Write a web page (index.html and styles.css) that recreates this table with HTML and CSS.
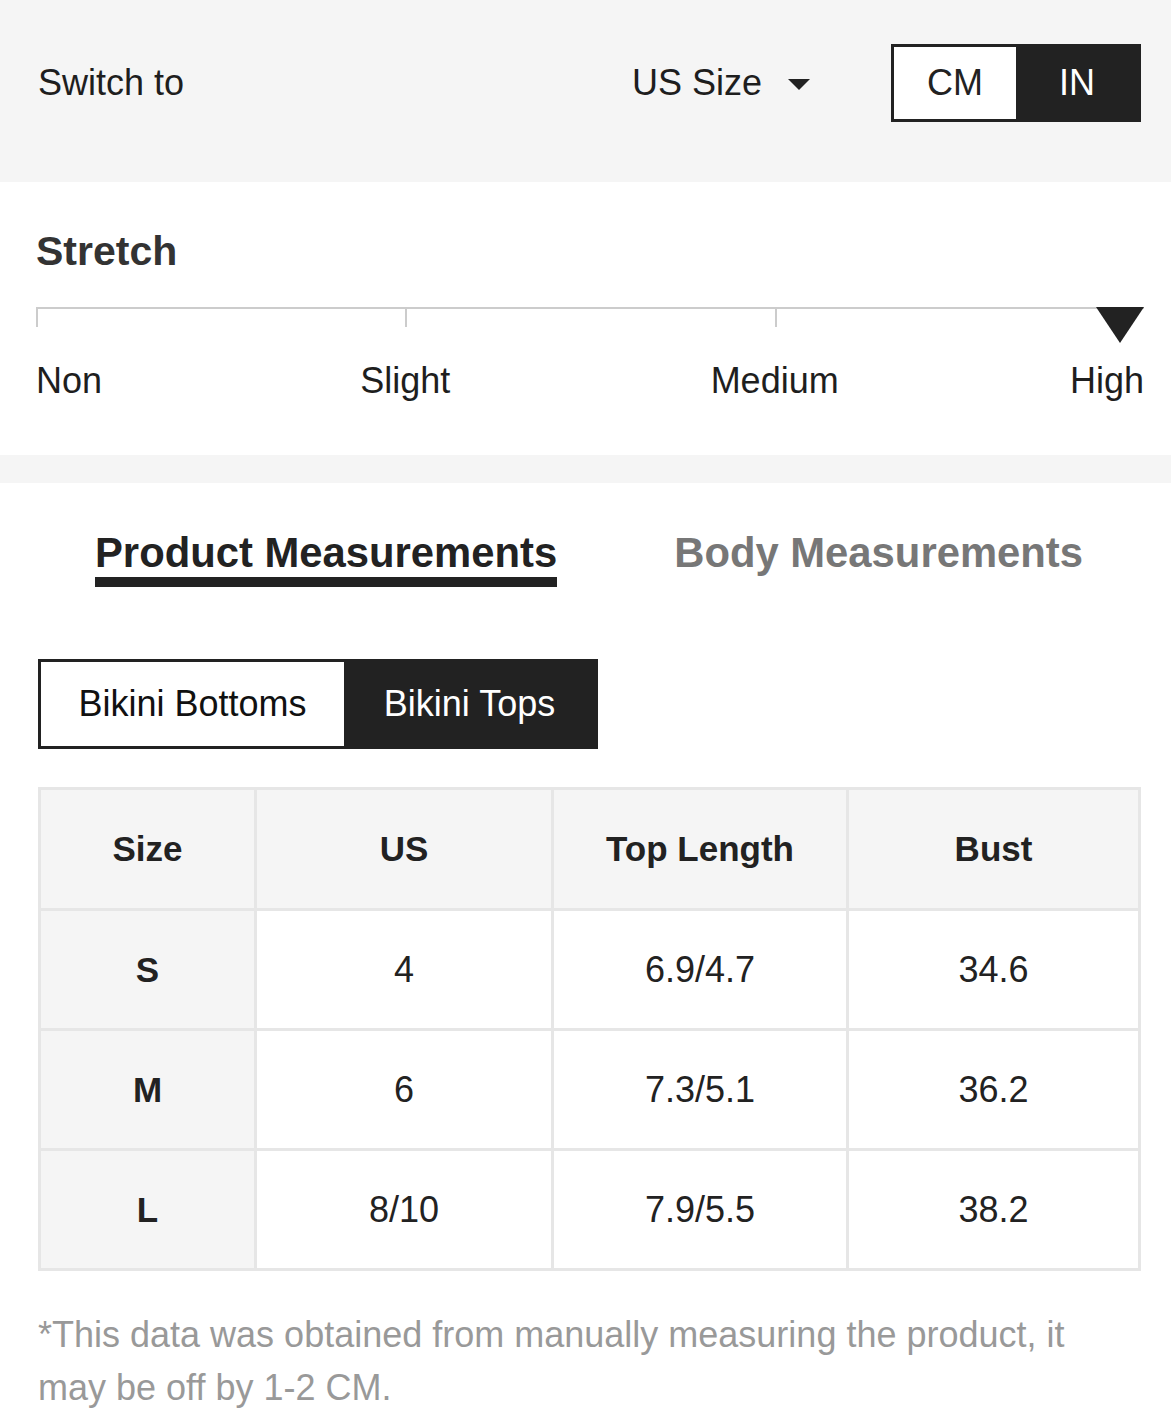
FILE: index.html
```html
<!DOCTYPE html>
<html lang="en">
<head>
<meta charset="utf-8">
<title>Size Guide</title>
<link rel="stylesheet" href="styles.css">
</head>
<body>
<div class="page">
  <section class="switch-bar">
    <div class="switch-row">
      <span class="switch-label">Switch to</span>
      <div class="switch-right">
        <div class="size-select">
          <span>US Size</span>
          <span class="caret"></span>
        </div>
        <div class="unit-toggle">
          <span class="unit">CM</span>
          <span class="unit active">IN</span>
        </div>
      </div>
    </div>
  </section>

  <section class="stretch">
    <h2 class="stretch-title">Stretch</h2>
    <div class="scale">
      <span class="seg"></span><span class="seg"></span><span class="seg"></span>
      <span class="marker"></span>
    </div>
    <div class="scale-labels">
      <span class="lbl lbl-non">Non</span>
      <span class="lbl lbl-slight">Slight</span>
      <span class="lbl lbl-medium">Medium</span>
      <span class="lbl lbl-high">High</span>
    </div>
  </section>

  <div class="divider-band"></div>

  <section class="measure">
    <div class="tabs">
      <span class="tab active">Product Measurements</span>
      <span class="tab">Body Measurements</span>
    </div>

    <div class="type-toggle">
      <span class="type">Bikini Bottoms</span>
      <span class="type active">Bikini Tops</span>
    </div>

    <table class="size-table">
      <colgroup>
        <col class="c1"><col class="c2"><col class="c3"><col class="c4">
      </colgroup>
      <thead>
        <tr class="head-row"><th>Size</th><th>US</th><th>Top Length</th><th>Bust</th></tr>
      </thead>
      <tbody>
        <tr><th>S</th><td>4</td><td>6.9/4.7</td><td>34.6</td></tr>
        <tr><th>M</th><td>6</td><td>7.3/5.1</td><td>36.2</td></tr>
        <tr><th>L</th><td>8/10</td><td>7.9/5.5</td><td>38.2</td></tr>
      </tbody>
    </table>

    <p class="note">*This data was obtained from manually measuring the product, it may be off by 1-2 CM.</p>
  </section>
</div>
</body>
</html>
```

FILE: styles.css
```css
* { box-sizing: border-box; }

html, body {
  margin: 0;
  padding: 0;
  background: #ffffff;
}

body {
  font-family: "Liberation Sans", Arial, Helvetica, sans-serif;
  color: #222222;
  width: 1171px;
}

.page {
  width: 1171px;
}

/* top switch bar */
.switch-bar {
  background: #f5f5f5;
  height: 182px;
  padding: 44px 30px 0 38px;
}

.switch-row {
  display: flex;
  align-items: center;
  height: 78px;
}

.switch-label {
  font-size: 36px;
  line-height: 42px;
  color: #1e1e1e;
}

.switch-right {
  margin-left: auto;
  display: flex;
  align-items: center;
  gap: 81px;
}

.size-select {
  display: flex;
  align-items: center;
  gap: 26px;
  font-size: 36px;
  line-height: 42px;
  color: #1e1e1e;
}

.caret {
  width: 0;
  height: 0;
  border-left: 11px solid transparent;
  border-right: 11px solid transparent;
  border-top: 11px solid #222222;
  margin-top: 2px;
}

.unit-toggle {
  display: flex;
  width: 250px;
  height: 78px;
  border: 3px solid #222222;
  background: #ffffff;
}

.unit {
  flex: 1;
  display: flex;
  align-items: center;
  justify-content: center;
  font-size: 36px;
  line-height: 42px;
  color: #222222;
}

.unit.active {
  background: #222222;
  color: #ffffff;
}

/* stretch */
.stretch {
  padding: 45px 27px 53px 36px;
}

.stretch-title {
  margin: 0;
  font-size: 41px;
  line-height: 48px;
  font-weight: 700;
  color: #333333;
}

.scale {
  position: relative;
  margin-top: 32px;
  height: 53px;
  width: 1108px;
  display: flex;
  border-top: 2px solid #cccccc;
}

.seg {
  flex: 1;
  height: 18px;
  border-left: 2px solid #cccccc;
}

.marker {
  position: absolute;
  right: 0;
  top: -2px;
  width: 0;
  height: 0;
  border-left: 24px solid transparent;
  border-right: 24px solid transparent;
  border-top: 36px solid #222222;
}

.scale-labels {
  width: 1108px;
  display: grid;
  grid-template-columns: repeat(3, 1fr);
  font-size: 36px;
  line-height: 42px;
  color: #1e1e1e;
}

.lbl { grid-row: 1; white-space: nowrap; }
.lbl-non { grid-column: 1; justify-self: start; }
.lbl-slight { grid-column: 2; justify-self: start; transform: translateX(-50%); }
.lbl-medium { grid-column: 3; justify-self: start; transform: translateX(-50%); }
.lbl-high { grid-column: 3; justify-self: end; }

.divider-band {
  height: 28px;
  background: #f5f5f5;
}

/* measurements */
.measure {
  padding: 46px 30px 0 38px;
}

.tabs {
  display: flex;
  justify-content: center;
  gap: 117px;
  margin-left: -38px;
  margin-right: -30px;
  padding-left: 7px;
}

.tab {
  font-size: 41.8px;
  line-height: 48px;
  font-weight: 700;
  color: #777777;
  border-bottom: 10px solid transparent;
}

.tab.active {
  color: #222222;
  border-bottom-color: #222222;
}

.type-toggle {
  display: inline-flex;
  margin-top: 72px;
  height: 90px;
  border: 3px solid #222222;
}

.type {
  display: flex;
  align-items: center;
  justify-content: center;
  width: 303px;
  font-size: 36px;
  line-height: 42px;
  color: #111111;
}

.type.active {
  width: 251px;
  background: #222222;
  color: #ffffff;
}

.size-table {
  margin-top: 38px;
  width: 1103px;
  table-layout: fixed;
  border-collapse: separate;
  border-spacing: 3px;
  background: #e6e6e6;
}

.c1 { width: 213px; }
.c2 { width: 294px; }
.c3 { width: 292px; }
.c4 { width: 289px; }

.size-table th,
.size-table td {
  height: 117px;
  padding: 0;
  text-align: center;
  vertical-align: middle;
  color: #222222;
}

.size-table .head-row th {
  height: 118px;
}

.size-table th {
  font-size: 35px;
  font-weight: 700;
  background: #f5f5f5;
}

.size-table td {
  font-size: 36px;
  font-weight: 400;
  background: #ffffff;
}

.note {
  margin: 37px 0 0 0;
  max-width: 1080px;
  font-size: 36px;
  line-height: 53px;
  color: #999999;
}
```
